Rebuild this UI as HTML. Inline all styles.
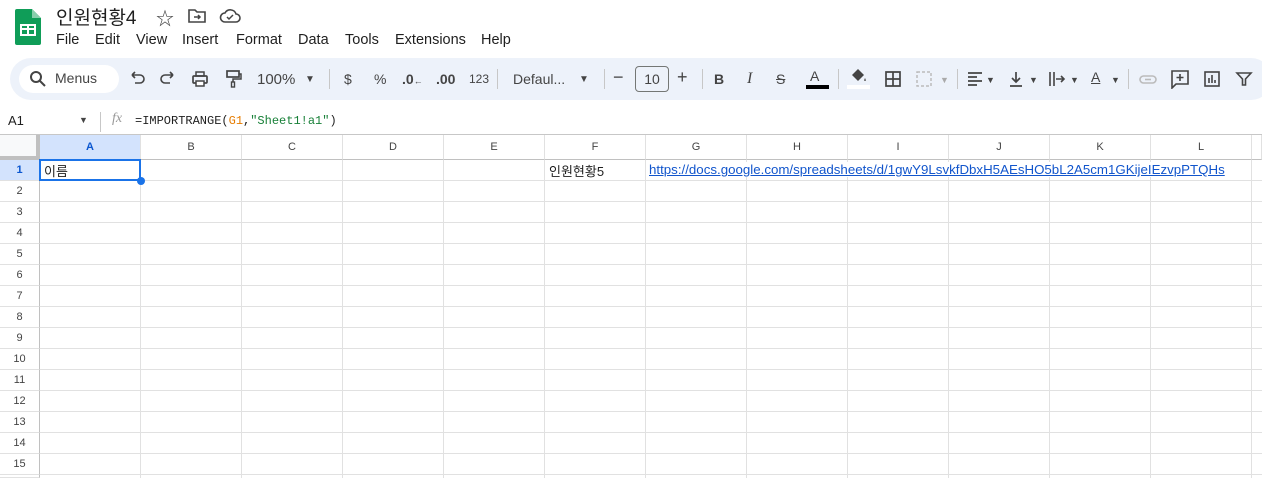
<!DOCTYPE html>
<html style="overflow:hidden;width:1262px;height:478px"><head><meta charset="utf-8"><style>
*{margin:0;padding:0;box-sizing:border-box}
body{width:1262px;height:478px;overflow:hidden;background:#fff;font-family:"Liberation Sans","Noto Sans CJK KR",sans-serif;color:#1f1f1f;position:relative}
.a{position:absolute}
.m{position:absolute;top:32px;font-size:14.5px}
.tb{left:10px;top:58px;width:1262px;height:42px;background:#edf2fa;border-radius:22px}
.ic{position:absolute;top:69px;width:20px;height:20px}
.t{font-size:14px;color:#444;position:absolute;top:71px}
.sep{position:absolute;top:69px;width:1px;height:20px;background:#c7c7c7}
.grid{left:40px;top:160px;width:1222px;height:318px;
background:repeating-linear-gradient(to right,transparent 0 100px,#e1e1e1 100px 101px),repeating-linear-gradient(to bottom,transparent 0 20px,#e1e1e1 20px 21px)}
.ch{top:135px;height:25px;border-right:1px solid #e1e1e1;border-bottom:1px solid #c0c0c0;font-size:11px;color:#444;text-align:center;line-height:24px;width:101px}
.rh{left:0;width:40px;height:21px;border-bottom:1px solid #e1e1e1;border-right:1px solid #c0c0c0;font-size:11px;color:#444;text-align:center;line-height:20px}
</style></head><body>
<svg class="a" style="left:15px;top:9px" width="26" height="36" viewBox="0 0 26 36"><path d="M2 0h15l9 9v25a2 2 0 0 1-2 2H2a2 2 0 0 1-2-2V2a2 2 0 0 1 2-2z" fill="#0f9d58"/><path d="M17 0v9h9z" fill="#87ceac"/><rect x="5" y="15" width="16" height="12" fill="#fff"/><path d="M7 19h5v-2H7zM14 19h5v-2h-5zM7 25h5v-4H7zM14 25h5v-4h-5z" fill="#0f9d58"/></svg>
<div class="a" style="left:56px;top:3px;font-size:19px">인원현황4</div>
<div class="a" style="left:156px;top:5px;font-size:18px;color:#444">☆</div>
<svg class="a" style="left:188px;top:9px" width="18" height="14" viewBox="0 0 18 14"><path d="M1 1h6l2 2h8v10H1z" fill="none" stroke="#444" stroke-width="1.6"/><path d="M6 8h6M10 6l2 2-2 2" stroke="#444" stroke-width="1.5" fill="none"/></svg>
<svg class="a" style="left:219px;top:8px" width="22" height="16" viewBox="0 0 22 16"><path d="M6 14h11a4 4 0 0 0 0-8 6 6 0 0 0-11-1 4.5 4.5 0 0 0 0 9z" fill="none" stroke="#444" stroke-width="1.6"/><path d="M8 9l2 2 4-4" stroke="#444" stroke-width="1.5" fill="none"/></svg>
<div class="m" style="left:56px">File</div><div class="m" style="left:95px">Edit</div><div class="m" style="left:136px">View</div><div class="m" style="left:182px">Insert</div><div class="m" style="left:236px">Format</div><div class="m" style="left:298px">Data</div><div class="m" style="left:345px">Tools</div><div class="m" style="left:395px">Extensions</div><div class="m" style="left:481px">Help</div>
<div class="a tb"></div>
<div class="a" style="left:19px;top:65px;width:100px;height:28px;background:#fff;border-radius:14px"></div>
<svg class="a" style="left:29px;top:70px" width="18" height="18" viewBox="0 0 18 18"><circle cx="7" cy="7" r="5" fill="none" stroke="#444" stroke-width="2"/><path d="M11 11l5 5" stroke="#444" stroke-width="2"/></svg>
<div class="t" style="left:55px;top:70px">Menus</div>
<svg class="ic" style="left:127px" viewBox="0 0 20 20"><path d="M5 6h8a4 4 0 0 1 0 8H8M5 6l3-3M5 6l3 3" fill="none" stroke="#444" stroke-width="1.6"/></svg>
<svg class="ic" style="left:158px" viewBox="0 0 20 20"><path d="M15 6H7a4 4 0 0 0 0 8h5M15 6l-3-3M15 6l-3 3" fill="none" stroke="#444" stroke-width="1.6"/></svg>
<svg class="ic" style="left:190px" viewBox="0 0 20 20"><rect x="3" y="7" width="14" height="7" rx="1" fill="none" stroke="#444" stroke-width="1.7"/><rect x="6" y="3" width="8" height="4" fill="none" stroke="#444" stroke-width="1.5"/><rect x="6" y="12" width="8" height="5" fill="#fff" stroke="#444" stroke-width="1.5"/></svg>
<svg class="ic" style="left:223px" viewBox="0 0 20 20"><rect x="4" y="2" width="12" height="6" fill="none" stroke="#444" stroke-width="1.7"/><path d="M16 5h2v5h-8v3" fill="none" stroke="#444" stroke-width="1.5"/><rect x="8.5" y="13" width="3" height="5" fill="none" stroke="#444" stroke-width="1.4"/></svg>
<div class="t" style="left:257px;top:71px;font-size:15px">100%</div>
<div class="t" style="left:305px;font-size:10px;top:74px">▼</div>
<div class="sep" style="left:329px"></div>
<div class="t" style="left:344px">$</div>
<div class="t" style="left:374px">%</div>
<div class="t" style="left:402px;font-weight:bold">.0<span style="font-size:9px">←</span></div>
<div class="t" style="left:436px;font-weight:bold">.00</div>
<div class="t" style="left:469px;font-size:12px;top:72px">123</div>
<div class="sep" style="left:497px"></div>
<div class="t" style="left:513px">Defaul...</div>
<div class="t" style="left:579px;font-size:10px;top:74px">▼</div>
<div class="sep" style="left:604px"></div>
<div class="t" style="left:613px;font-size:18px;top:67px">−</div>
<div class="a" style="left:635px;top:66px;width:34px;height:26px;border:1px solid #747775;border-radius:4px;font-size:14px;text-align:center;line-height:24px;color:#444">10</div>
<div class="t" style="left:677px;font-size:18px;top:67px">+</div>
<div class="sep" style="left:702px"></div>
<div class="t" style="left:714px;font-weight:bold">B</div>
<div class="t" style="left:747px;font-style:italic;font-family:'Liberation Serif',serif;font-size:16px;top:70px">I</div>
<div class="t" style="left:776px;text-decoration:line-through">S</div>
<div class="t" style="left:810px;top:68px">A</div>
<div class="a" style="left:806px;top:85px;width:23px;height:4px;background:#000"></div>
<div class="sep" style="left:838px"></div>
<svg class="ic" style="left:848px;top:66px" viewBox="0 0 20 20"><path d="M4 9l6-6 6 6-6 6z" fill="#444"/><path d="M17 12c1 2 1 3 0 3s-1-1 0-3" fill="#444"/></svg>
<div class="a" style="left:847px;top:85px;width:23px;height:4px;background:#fff"></div>
<svg class="ic" style="left:883px" viewBox="0 0 20 20"><path d="M3 3h14v14H3zM10 3v14M3 10h14" fill="none" stroke="#444" stroke-width="1.7"/></svg>
<svg class="ic" style="left:914px" viewBox="0 0 20 20"><path d="M3 3h14v14H3z" fill="none" stroke="#bbb" stroke-width="1.5" stroke-dasharray="3 2"/></svg>
<div class="t" style="left:940px;font-size:9px;top:75px;color:#aaa">▼</div>
<div class="sep" style="left:957px"></div>
<svg class="ic" style="left:965px" viewBox="0 0 20 20"><path d="M3 4h14M3 8h9M3 12h14M3 16h9" stroke="#444" stroke-width="1.7"/></svg>
<div class="t" style="left:986px;font-size:9px;top:75px">▼</div>
<svg class="ic" style="left:1006px" viewBox="0 0 20 20"><path d="M10 3v10M6 9l4 4 4-4M4 17h12" fill="none" stroke="#444" stroke-width="1.7"/></svg>
<div class="t" style="left:1029px;font-size:9px;top:75px">▼</div>
<svg class="ic" style="left:1047px" viewBox="0 0 20 20"><path d="M3 3v14M7 3v14M9 10h8M14 7l3 3-3 3" fill="none" stroke="#444" stroke-width="1.6"/></svg>
<div class="t" style="left:1070px;font-size:9px;top:75px">▼</div>
<div class="t" style="left:1091px;top:69px;text-decoration:underline">A</div>
<div class="t" style="left:1111px;font-size:9px;top:75px">▼</div>
<div class="sep" style="left:1128px"></div>
<svg class="ic" style="left:1138px" viewBox="0 0 20 20"><rect x="2" y="7" width="16" height="7" rx="3.5" fill="none" stroke="#bbb" stroke-width="1.6"/><path d="M7 10.5h6" stroke="#bbb" stroke-width="1.6"/></svg>
<svg class="ic" style="left:1170px" viewBox="0 0 20 20"><path d="M2 2h16v13H6l-4 4z" fill="none" stroke="#444" stroke-width="1.6"/><path d="M10 5v7M6.5 8.5h7" stroke="#444" stroke-width="1.6"/></svg>
<svg class="ic" style="left:1202px" viewBox="0 0 20 20"><rect x="3" y="3" width="14" height="14" fill="none" stroke="#444" stroke-width="1.6"/><path d="M7 14V9M10 14V6M13 14v-3" stroke="#444" stroke-width="1.6"/></svg>
<svg class="ic" style="left:1234px" viewBox="0 0 20 20"><path d="M3 4h14l-5.5 6v6h-3v-6z" fill="none" stroke="#444" stroke-width="1.6"/></svg>
<div class="a" style="left:8px;top:113px;font-size:13px">A1</div>
<div class="a" style="left:79px;top:115px;font-size:9px;color:#444">▼</div>
<div class="a" style="left:100px;top:112px;width:1px;height:20px;background:#c7c7c7"></div>
<div class="a" style="left:112px;top:111px;font-size:14px;font-style:italic;color:#999;font-family:'Liberation Serif',serif">fx</div>
<div class="a" style="left:135px;top:114px;font-size:12px;font-family:'Liberation Mono',monospace">=IMPORTRANGE(<span style="color:#e67c00">G1</span>,<span style="color:#188038">"Sheet1!a1"</span>)</div>
<div class="a" style="left:0;top:134px;width:1262px;height:1px;background:#c7c7c7"></div>
<div class="a grid"></div>
<div class="a" style="left:0;top:135px;width:40px;height:25px;border-right:4px solid #c0c0c0;border-bottom:4px solid #c0c0c0;background:#f8f9fa"></div>
<div class="a ch" style="left:40px;width:101px;background:#d3e3fd;color:#0b57d0;font-weight:bold">A</div>
<div class="a ch" style="left:141px">B</div><div class="a ch" style="left:242px">C</div><div class="a ch" style="left:343px">D</div><div class="a ch" style="left:444px">E</div><div class="a ch" style="left:545px">F</div><div class="a ch" style="left:646px">G</div><div class="a ch" style="left:747px">H</div><div class="a ch" style="left:848px">I</div><div class="a ch" style="left:949px">J</div><div class="a ch" style="left:1050px">K</div><div class="a ch" style="left:1151px">L</div><div class="a ch" style="left:1252px;width:10px"></div>
<div class="a rh" style="top:160px;background:#d3e3fd;color:#0b57d0;font-weight:bold">1</div>
<div class="a rh" style="top:181px">2</div><div class="a rh" style="top:202px">3</div><div class="a rh" style="top:223px">4</div><div class="a rh" style="top:244px">5</div><div class="a rh" style="top:265px">6</div><div class="a rh" style="top:286px">7</div><div class="a rh" style="top:307px">8</div><div class="a rh" style="top:328px">9</div><div class="a rh" style="top:349px">10</div><div class="a rh" style="top:370px">11</div><div class="a rh" style="top:391px">12</div><div class="a rh" style="top:412px">13</div><div class="a rh" style="top:433px">14</div><div class="a rh" style="top:454px">15</div><div class="a rh" style="top:475px;height:3px"></div>
<div class="a" style="left:39px;top:159px;width:102px;height:22px;border:2px solid #1a73e8"></div>
<div class="a" style="left:137px;top:177px;width:8px;height:8px;border-radius:50%;background:#1a73e8"></div>
<div class="a" style="left:44px;top:161px;font-size:13px">이름</div>
<div class="a" style="left:549px;top:161px;font-size:13px">인원현황5</div>
<div class="a" style="left:649px;top:162px;font-size:13.3px;color:#1155cc;text-decoration:underline;background:#fff;white-space:nowrap">https://docs.google.com/spreadsheets/d/1gwY9LsvkfDbxH5AEsHO5bL2A5cm1GKijeIEzvpPTQHs</div>
</body></html>
